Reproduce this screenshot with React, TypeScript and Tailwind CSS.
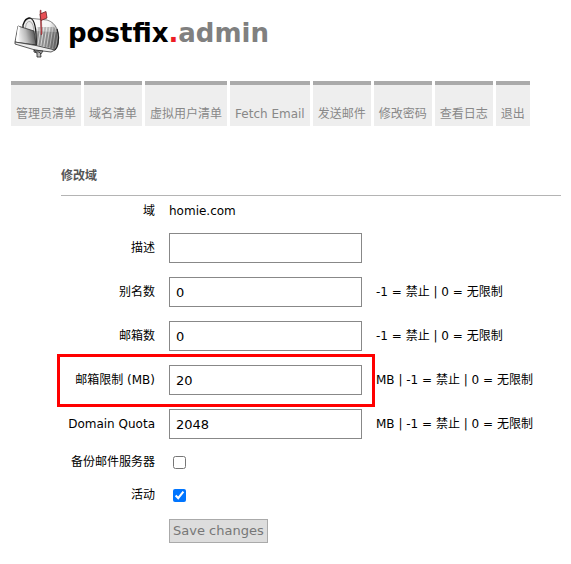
import React from "react";

const tabs = ["管理员清单", "域名清单", "虚拟用户清单", "Fetch Email", "发送邮件", "修改密码", "查看日志", "退出"];

type Field = { id: string; label: string; value: string; hint?: string; marked?: boolean };

const fields: Field[] = [
  { id: "description", label: "描述", value: "" },
  { id: "aliases", label: "别名数", value: "0", hint: "-1 = 禁止 | 0 = 无限制" },
  { id: "mailboxes", label: "邮箱数", value: "0", hint: "-1 = 禁止 | 0 = 无限制" },
  { id: "maxquota", label: "邮箱限制 (MB)", value: "20", hint: "MB | -1 = 禁止 | 0 = 无限制", marked: true },
  { id: "quota", label: "Domain Quota", value: "2048", hint: "MB | -1 = 禁止 | 0 = 无限制" },
];

function Mailbox() {
  return (
    <svg viewBox="12 8 50 50" className="h-[50px] w-[50px]" aria-hidden="true">
      <defs>
        <linearGradient id="door" x1="0" y1="0.2" x2="1" y2="0">
          <stop offset="0" stopColor="#fff" />
          <stop offset="0.45" stopColor="#bbb" />
          <stop offset="0.8" stopColor="#666" />
          <stop offset="1" stopColor="#333" />
        </linearGradient>
        <linearGradient id="shell" x1="0" y1="0" x2="1" y2="0.3">
          <stop offset="0" stopColor="#fff" />
          <stop offset="0.7" stopColor="#f4f4f4" />
          <stop offset="1" stopColor="#aaa" />
        </linearGradient>
        <pattern id="hatch" width="3" height="2" patternUnits="userSpaceOnUse" patternTransform="rotate(9)">
          <path d="M0 1h2.3" stroke="#111" strokeWidth="0.9" />
        </pattern>
      </defs>
      <path d="M34 49 40 49 41 57H37V53L34 52Z" fill="#bbb" stroke="#222" strokeWidth="0.8" />
      <path d="M28 18 47 20Q54 22 57 29Q60 37 58 45L55 50 36 46 35 30Q34 21 28 18Z" fill="url(#shell)" stroke="#555" strokeWidth="0.7" />
      <path d="M36 31 57 32Q59 40 57 46L55 49 36 45Z" fill="url(#hatch)" />
      <path d="M37 27 54 27 57 32 36 31Z" fill="url(#hatch)" opacity="0.6" />
      <path d="M57 29Q60 38 57 47L55 50" fill="none" stroke="#222" strokeWidth="1.2" />
      <path d="M23 29V25Q25 18 30 18Q37 20 36 45L23 41Z" fill="#e8e8e8" stroke="#111" strokeWidth="1.3" />
      <path d="M25.500 28Q26 21 30 21.500Q34 23 34 34" fill="none" stroke="#999" strokeWidth="0.8" />
      <path d="M18 26 34 31 36 45 15 42Z" fill="url(#door)" stroke="#333" strokeWidth="0.8" />
      <path d="M18 26 16 41 18 42 20 27Z" fill="#fff" />
      <path d="M15 42 36 45.500 55 50 51 52 35 50 15 44Z" fill="#eee" stroke="#333" strokeWidth="0.8" />
      <path d="M34 50 43 51 41 54 39 52 36 52Z" fill="#999" stroke="#222" strokeWidth="0.7" />
      <path d="M40 10.500 41 10 42 34 41 35Z" fill="#df3f46" stroke="#70292c" strokeWidth="0.5" />
      <path d="M40 14 46 11.500 47 18 41 20.500Z" fill="#e84f55" stroke="#682326" strokeWidth="0.8" />
    </svg>
  );
}

function Row({ children }: { children: React.ReactNode }) {
  return <div className="relative grid grid-cols-[94px_193px_1fr] items-center gap-x-3.5">{children}</div>;
}

export default function App() {
  return (
    <div className="bg-white pb-3 font-['DejaVu_Sans','Noto_Sans_CJK_SC',sans-serif] text-xs leading-4 text-black">
      <header className="flex h-[81px] items-start gap-1.5 pt-2 pl-3">
        <Mailbox />
        <h1 className="text-[26px] leading-[50px] font-bold">
          postfix<span className="text-[#ed1c24]">.</span>
          <span className="text-[#808080]">admin</span>
        </h1>
      </header>

      <nav className="flex gap-[3px] pl-[11px]">
        {tabs.map((tab) => (
          <a
            key={tab}
            href="#"
            className="flex h-[45px] items-end border-t-4 border-[#aaa] bg-[#eee] px-[5px] pb-1 whitespace-nowrap text-[#888]"
          >
            {tab}
          </a>
        ))}
      </nav>

      <form className="mt-8 mr-2.5 ml-[61px]" onSubmit={(e) => e.preventDefault()}>
        <h2 className="border-b border-[#b4b4b4] pt-2.5 pb-[11px] font-bold text-[#555]">修改域</h2>
        <Row>
          <span className="py-[7px] text-right">域</span>
          <span>homie.com</span>
        </Row>
        {fields.map((f) => (
          <Row key={f.id}>
            <label htmlFor={f.id} className="text-right whitespace-nowrap">{f.label}</label>
            <input
              id={f.id}
              type="text"
              defaultValue={f.value}
              className="my-[7px] h-[30px] w-full border border-[#888] bg-white px-1.5 text-[13px] outline-none"
            />
            <span className="whitespace-nowrap">{f.hint}</span>
            {f.marked && (
              <div className="pointer-events-none absolute -top-1 -left-1 h-[53px] w-[318px] border-3 border-[#f00]" />
            )}
          </Row>
        ))}
        <Row>
          <label htmlFor="backupmx" className="text-right leading-[33px] whitespace-nowrap">备份邮件服务器</label>
          <input id="backupmx" type="checkbox" className="ml-1 h-[13px] w-[13px]" />
        </Row>
        <Row>
          <label htmlFor="active" className="text-right leading-[33px]">活动</label>
          <input id="active" type="checkbox" defaultChecked className="ml-1 h-[13px] w-[13px]" />
        </Row>
        <Row>
          <button
            type="submit"
            className="col-start-2 my-[7px] h-6 justify-self-start border border-[#aaa] bg-[#ddd] px-[3px] text-[13px] text-[#777]"
          >
            Save changes
          </button>
        </Row>
      </form>
    </div>
  );
}
